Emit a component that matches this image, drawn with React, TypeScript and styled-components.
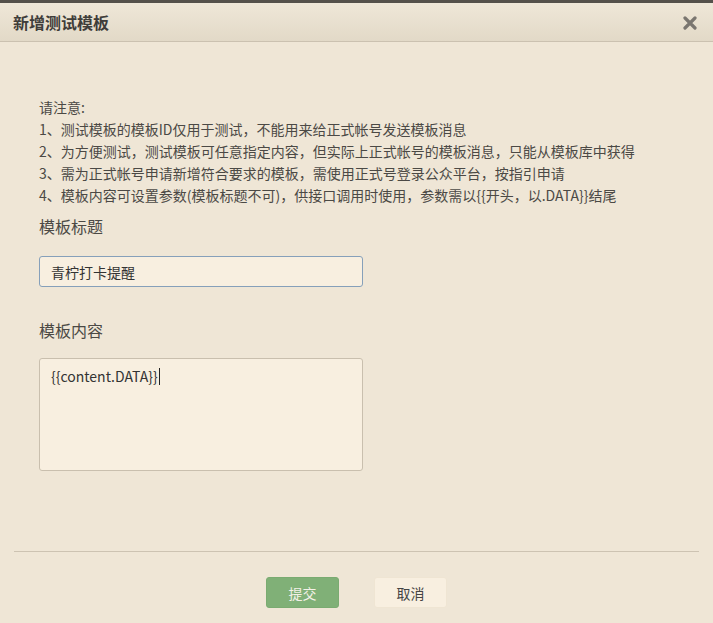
import React from 'react';
import styled, { createGlobalStyle } from 'styled-components';

const GlobalStyle = createGlobalStyle`
  html, body {
    margin: 0;
    padding: 0;
    background: #efe6d6;
    font-family: "Noto Sans CJK SC", "Noto Sans", sans-serif;
  }
`;

const notes = [
  '请注意:',
  '1、测试模板的模板ID仅用于测试，不能用来给正式帐号发送模板消息',
  '2、为方便测试，测试模板可任意指定内容，但实际上正式帐号的模板消息，只能从模板库中获得',
  '3、需为正式帐号申请新增符合要求的模板，需使用正式号登录公众平台，按指引申请',
  '4、模板内容可设置参数(模板标题不可)，供接口调用时使用，参数需以{{开头，以.DATA}}结尾',
];

const App = () => {
  return (
    <Dialog>
      <GlobalStyle />
      <Header>
        <Title>新增测试模板</Title>
        <CloseButton aria-label="关闭">
          <svg width="14" height="14" viewBox="0 0 14 14">
            <path d="M2 2 L12 12 M12 2 L2 12" stroke="#7a7670" strokeWidth="3.2" strokeLinecap="round" />
          </svg>
        </CloseButton>
      </Header>
      <Body>
        <Notes>
          {notes.map(line => (
            <NoteLine key={line}>{line}</NoteLine>
          ))}
        </Notes>
        <Label $top={9}>模板标题</Label>
        <TextInput>青柠打卡提醒</TextInput>
        <Label $top={32}>模板内容</Label>
        <TextArea>
          {'{{content.DATA}}'}
          <Caret />
        </TextArea>
      </Body>
      <Divider />
      <Footer>
        <Button $primary>提交</Button>
        <Button>取消</Button>
      </Footer>
    </Dialog>
  );
};

export default App;

const Dialog = styled.div`
  width: 713px;
  height: 623px;
  display: flex;
  flex-direction: column;
  background: #efe6d6;
  border-top: 3px solid #55514b;
  box-sizing: border-box;
  overflow: hidden;
`;

const Header = styled.div`
  height: 38px;
  display: flex;
  align-items: center;
  justify-content: space-between;
  padding: 0 16px 0 13px;
  background: linear-gradient(#efe7d8, #e2d9c7);
  border-bottom: 1px solid #cbc1b0;
`;

const Title = styled.h3`
  margin: 0;
  font-size: 16px;
  font-weight: bold;
  color: #3f3d3a;
`;

const CloseButton = styled.div`
  display: flex;
  align-items: center;
  margin-top: 2px;
  cursor: pointer;
`;

const Body = styled.div`
  padding: 54px 39px 0;
  display: flex;
  flex-direction: column;
  align-items: flex-start;
`;

const Notes = styled.div`
  font-size: 14px;
  line-height: 22px;
  color: #4b4945;
`;

const NoteLine = styled.div`
  white-space: nowrap;
`;

const Label = styled.div<{ $top: number }>`
  margin-top: ${p => p.$top}px;
  font-size: 16px;
  line-height: 22px;
  color: #4b4945;
`;

const TextInput = styled.div`
  margin-top: 19px;
  width: 324px;
  height: 31px;
  box-sizing: border-box;
  padding: 0 11px;
  display: flex;
  align-items: center;
  font-size: 14px;
  color: #333;
  background: #f8efe0;
  border: 1px solid #86a0ba;
  border-radius: 3px;
`;

const TextArea = styled.div`
  margin-top: 17px;
  width: 324px;
  height: 113px;
  box-sizing: border-box;
  padding: 7px 11px;
  font-size: 14px;
  line-height: 20px;
  color: #333;
  background: #f8efe0;
  border: 1px solid #c9bfae;
  border-radius: 3px;
`;

const Caret = styled.span`
  display: inline-block;
  width: 1px;
  height: 17px;
  margin-left: 1px;
  vertical-align: -3px;
  background: #222;
`;

const Divider = styled.div`
  margin: 80px 14px 0;
  border-top: 1px solid #cdc3b2;
`;

const Footer = styled.div`
  display: flex;
  justify-content: center;
  gap: 35px;
  padding-top: 25px;
`;

const Button = styled.div<{ $primary?: boolean }>`
  width: 73px;
  height: 31px;
  box-sizing: border-box;
  display: flex;
  align-items: center;
  justify-content: center;
  font-size: 14px;
  border-radius: 3px;
  cursor: pointer;
  color: ${p => (p.$primary ? '#f4f1e8' : '#444')};
  background: ${p => (p.$primary ? '#80b077' : '#f8efe0')};
  border: 1px solid ${p => (p.$primary ? '#7aab71' : '#efe5d3')};
`;
